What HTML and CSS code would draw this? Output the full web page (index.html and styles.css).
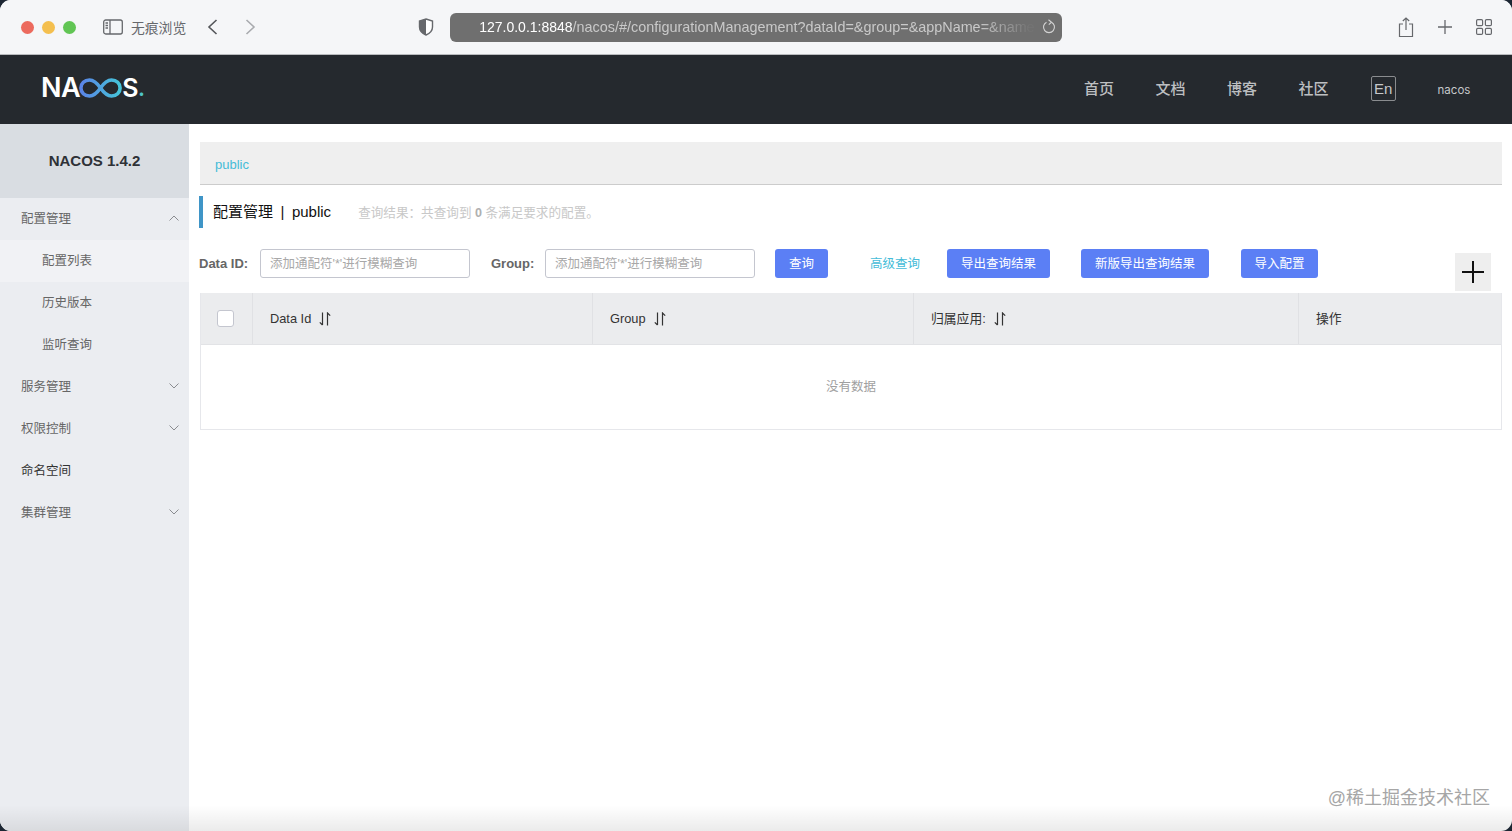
FILE: index.html
```html
<!DOCTYPE html>
<html lang="en">
<head>
  <meta charset="UTF-8" />
  <title>Nacos</title>
  <link rel="stylesheet" href="styles.css">
</head>
<body>
  <div class="window">
    <!-- Browser toolbar -->
    <div class="browser-bar">
      <div class="lights">
        <span class="light red"></span>
        <span class="light yellow"></span>
        <span class="light green"></span>
      </div>
      <svg class="tb-sidebar" width="20" height="16" viewBox="0 0 20 16" fill="none" stroke="#66686c" stroke-width="1.3">
        <rect x="0.7" y="1" width="18.6" height="14" rx="2"/>
        <path d="M7 1v14M2.5 4h2.5M2.5 6.5h2.5M2.5 9h2.5"/>
      </svg>
      <span class="private">无痕浏览</span>
      <svg class="tb-back" width="11" height="16" viewBox="0 0 11 16" fill="none" stroke="#55575b" stroke-width="1.6">
        <path d="M9.5 1L2 8l7.5 7"/>
      </svg>
      <svg class="tb-forward" width="11" height="16" viewBox="0 0 11 16" fill="none" stroke="#a9abaf" stroke-width="1.6">
        <path d="M1.5 1L9 8l-7.5 7"/>
      </svg>
      <svg class="tb-shield" width="16" height="18" viewBox="0 0 16 18">
        <path d="M8 1l6.5 2v6c0 4-3 6.500-6.500 8-3.500-1.500-6.500-4-6.500-8V3z" fill="#fff" stroke="#66686c" stroke-width="1.400"/>
        <path d="M8 1L1.500 3v6c0 4 3 6.500 6.500 8z" fill="#66686c"/>
      </svg>
      <div class="url-bar">
        <span class="url-text"><span class="url-host">127.0.0.1:8848</span><span class="url-path">/nacos/#/configurationManagement?dataId=&amp;group=&amp;appName=&amp;name</span></span>
        <svg width="14" height="16" viewBox="0 0 14 16" fill="none" stroke="#d4d4d4" stroke-width="1.100">
          <path d="M9.500 3.200A5.500 5.500 0 1 1 4.500 3.200"/>
          <path d="M6.500 0.800L9.500 3.200 6.800 5.600"/>
        </svg>
      </div>
      <div class="tb-right">
        <svg width="16" height="21" viewBox="0 0 16 21" fill="none" stroke="#66686c" stroke-width="1.200">
          <path d="M5 7H1.500v12.500h13V7H11M8 13V1M4.800 4L8 1l3.200 3"/>
        </svg>
        <svg width="14" height="14" viewBox="0 0 14 14" fill="none" stroke="#66686c" stroke-width="1.300">
          <path d="M7 0v14M0 7h14"/>
        </svg>
        <svg width="16" height="16" viewBox="0 0 16 16" fill="none" stroke="#66686c" stroke-width="1.200">
          <rect x="0.600" y="0.600" width="6" height="6" rx="1.200"/>
          <rect x="9.400" y="0.600" width="6" height="6" rx="1.200"/>
          <rect x="0.600" y="9.400" width="6" height="6" rx="1.200"/>
          <rect x="9.400" y="9.400" width="6" height="6" rx="1.200"/>
        </svg>
      </div>
    </div>

    <!-- Nacos header -->
    <header class="top-header">
      <div class="logo">
        <span>NA</span>
        <svg class="logo-mark" width="43" height="20" viewBox="0 0 43 20" fill="none" stroke="url(#logoGrad)" stroke-width="3.600">
          <defs>
            <linearGradient id="logoGrad" x1="0" y1="0" x2="1" y2="0">
              <stop offset="0" stop-color="#5a84e8"/>
              <stop offset="1" stop-color="#45c4d8"/>
            </linearGradient>
          </defs>
          <path d="M21.500 10C18 5 15 2 10.500 2 5.500 2 1.900 5.500 1.900 10s3.600 8 8.600 8c4.500 0 7.500-3 11-8s6.500-8 11-8c5 0 8.600 3.500 8.600 8s-3.600 8-8.600 8c-4.500 0-7.500-3-11-8z"/>
        </svg>
        <span class="logo-s">S</span><span class="logo-dot">.</span>
      </div>
      <nav class="top-nav">
        <a>首页</a>
        <a>文档</a>
        <a>博客</a>
        <a>社区</a>
      </nav>
      <span class="lang-btn">En</span>
      <span class="user">nacos</span>
    </header>

    <div class="layout">
      <!-- Left menu -->
      <aside class="sidebar">
        <div class="version">NACOS 1.4.2</div>
        <div class="menu-item">配置管理
          <svg width="10" height="6" viewBox="0 0 10 6" fill="none" stroke="#8a8c90"><path d="M0.500 5.500L5 1l4.500 4.500"/></svg>
        </div>
        <div class="menu-sub active">配置列表</div>
        <div class="menu-sub">历史版本</div>
        <div class="menu-sub">监听查询</div>
        <div class="menu-item">服务管理
          <svg width="10" height="6" viewBox="0 0 10 6" fill="none" stroke="#8a8c90"><path d="M0.500 0.500L5 5l4.500-4.500"/></svg>
        </div>
        <div class="menu-item">权限控制
          <svg width="10" height="6" viewBox="0 0 10 6" fill="none" stroke="#8a8c90"><path d="M0.500 0.500L5 5l4.500-4.500"/></svg>
        </div>
        <div class="menu-item dark">命名空间</div>
        <div class="menu-item">集群管理
          <svg width="10" height="6" viewBox="0 0 10 6" fill="none" stroke="#8a8c90"><path d="M0.500 0.500L5 5l4.500-4.500"/></svg>
        </div>
      </aside>

      <!-- Main content -->
      <main class="content">
        <div class="crumb"><a>public</a></div>

        <div class="page-title">
          <h1>配置管理<span class="sep">|</span>public</h1>
          <span class="result">查询结果：共查询到 <b>0</b> 条满足要求的配置。</span>
        </div>

        <div class="search-row">
          <label class="lbl-id">Data ID:</label>
          <input class="search-input" type="text" placeholder="添加通配符'*'进行模糊查询">
          <label class="lbl-group">Group:</label>
          <input class="search-input" type="text" placeholder="添加通配符'*'进行模糊查询">
          <button class="btn btn-query">查询</button>
          <a class="adv-link">高级查询</a>
          <button class="btn btn-export">导出查询结果</button>
          <button class="btn btn-export-new">新版导出查询结果</button>
          <button class="btn btn-import">导入配置</button>
          <div class="add-btn">
            <svg width="22" height="22" viewBox="0 0 22 22" fill="none" stroke="#111" stroke-width="2"><path d="M11 0v22M0 11h22"/></svg>
          </div>
        </div>

        <div class="table">
          <div class="table-head">
            <div class="th th-check"><span class="checkbox"></span></div>
            <div class="th">Data Id
              <svg class="sort" width="12" height="14" viewBox="0 0 12 14" fill="none" stroke="#333" stroke-width="1.200"><path d="M3.500 0.500v12.500M0.800 10.300l2.700 2.700M8.500 13.500V1l2.700 2.700"/></svg>
            </div>
            <div class="th">Group
              <svg class="sort" width="12" height="14" viewBox="0 0 12 14" fill="none" stroke="#333" stroke-width="1.200"><path d="M3.500 0.500v12.500M0.800 10.300l2.700 2.700M8.500 13.500V1l2.700 2.700"/></svg>
            </div>
            <div class="th cjk">归属应用:
              <svg class="sort" width="12" height="14" viewBox="0 0 12 14" fill="none" stroke="#333" stroke-width="1.200"><path d="M3.500 0.500v12.500M0.800 10.300l2.700 2.700M8.500 13.500V1l2.700 2.700"/></svg>
            </div>
            <div class="th cjk">操作</div>
          </div>
          <div class="table-empty">没有数据</div>
        </div>
      </main>
    </div>

    <div class="bottom-shade"></div>
    <div class="watermark">@稀土掘金技术社区</div>
  </div>
</body>
</html>
```

FILE: styles.css
```css
:root {
  --primary: #5b7ff5;
  --link: #45bcd8;
  --text: #333;
  --cjk-font: "Liberation Sans", "Noto Sans CJK SC", sans-serif;
}

html, body {
  margin: 0;
  padding: 0;
  height: 100%;
  overflow: hidden;
  background-color: #1c2633;
}

body {
  font-family: var(--cjk-font);
  color: var(--text);
}

a {
  cursor: pointer;
}

/* Window */
.window {
  position: relative;
  display: flex;
  flex-direction: column;
  height: 831px;
  overflow: hidden;
  border-radius: 11px;
  background: #fff;
}

/* Browser toolbar */
.browser-bar {
  flex: none;
  display: flex;
  align-items: center;
  height: 55px;
  padding-left: 21px;
  box-sizing: border-box;
  background: #f5f6f8;
  border-bottom: 1px solid #b9bbbe;
}

.lights {
  display: flex;
  gap: 8px;
}

.light {
  width: 13px;
  height: 13px;
  border-radius: 50%;
}

.red { background: #ec6a5e; }
.yellow { background: #f4bf4f; }
.green { background: #61c554; }

.tb-sidebar {
  margin-left: 27px;
}

.private {
  margin-left: 8px;
  font-size: 13.800px;
  color: #66686c;
}

.tb-back {
  margin-left: 21px;
}

.tb-forward {
  margin-left: 27px;
}

.tb-shield {
  margin-left: 162px;
}

.url-bar {
  display: flex;
  align-items: center;
  width: 612px;
  height: 29px;
  margin-left: 16px;
  padding: 0 6px 0 29px;
  box-sizing: border-box;
  background: #6f6f6f;
  border-radius: 6px;
}

.url-text {
  flex: 1;
  margin-right: 7px;
  font-size: 14px;
  white-space: nowrap;
  -webkit-mask-image: linear-gradient(to right, #000 90%, rgba(0, 0, 0, 0.05) 99%);
  mask-image: linear-gradient(to right, #000 90%, rgba(0, 0, 0, 0.05) 99%);
}

.url-host {
  color: #fff;
}

.url-path {
  font-size: 14.400px;
  color: #c9c9c9;
}

.tb-right {
  display: flex;
  align-items: center;
  gap: 24px;
  margin-left: 336px;
}

/* Nacos header */
.top-header {
  flex: none;
  display: flex;
  align-items: center;
  height: 69px;
  padding: 0 0 2px 41px;
  box-sizing: border-box;
  background: #25292e;
}

.logo {
  display: flex;
  align-items: center;
  width: 1043px;
  margin-bottom: 2px;
  font-family: Inter, sans-serif;
  font-size: 27px;
  font-weight: 600;
  letter-spacing: -0.5px;
  color: #fff;
}

.logo-mark {
  margin: 0 0 0 -1px;
}

.logo-s {
  font-size: 25px;
}

.logo-dot {
  font-size: 22px;
  color: #4fc4c8;
}

.top-nav {
  display: flex;
  gap: 41.500px;
  margin-bottom: 2px;
  font-size: 15px;
  font-weight: 500;
  color: #bdbfc1;
}

.lang-btn {
  width: 25px;
  height: 25px;
  margin-left: 42px;
  box-sizing: border-box;
  border: 1px solid #8a8c8f;
  border-radius: 2px;
  font-size: 15px;
  line-height: 23px;
  text-align: center;
  color: #c6c8ca;
}

.user {
  margin: 2px 0 0 42px;
  font-family: Inter, sans-serif;
  font-size: 11.500px;
  color: #c6c8ca;
}

/* Layout */
.layout {
  flex: 1;
  display: flex;
  min-height: 0;
}

/* Left menu */
.sidebar {
  flex: none;
  width: 189px;
  background: #ebedf1;
}

.version {
  height: 74px;
  background: #d9dde2;
  font-size: 15px;
  font-weight: 700;
  line-height: 73px;
  text-align: center;
  color: #2e3136;
}

.menu-item, .menu-sub {
  display: flex;
  align-items: center;
  justify-content: space-between;
  height: 42px;
  padding: 0 10px 3px 21px;
  box-sizing: border-box;
  font-size: 12.500px;
  color: #666;
}

.menu-sub {
  padding-left: 42px;
}

.menu-sub.active {
  background: #f1f2f5;
}

.menu-item.dark {
  color: #333;
}

/* Main content */
.content {
  flex: 1;
  min-width: 0;
  padding: 18px 10px 0;
}

.crumb {
  height: 43px;
  margin-left: 1px;
  padding-left: 15px;
  box-sizing: border-box;
  background: #efefef;
  border-bottom: 1px solid #ccc;
  font-size: 13px;
  line-height: 45px;
  color: var(--link);
}

.page-title {
  display: flex;
  align-items: center;
  height: 32px;
  margin-top: 11px;
  padding: 0 0 3px 10px;
  box-sizing: border-box;
  border-left: 4px solid #3f95c7;
}

.page-title h1 {
  margin: 0;
  font-size: 15px;
  font-weight: 400;
  color: #111;
}

.sep {
  margin: 0 7.500px;
}

.result {
  margin: 1px 0 0 27px;
  font-size: 12.600px;
  color: #c8c8c8;
}

.result b {
  color: #b0b0b0;
}

.search-row {
  display: flex;
  align-items: flex-start;
  height: 42px;
  margin-top: 21px;
  margin-bottom: 2px;
}

.search-row label {
  font-size: 13px;
  font-weight: 700;
  line-height: 29px;
  color: #666;
}

.lbl-id {
  width: 61px;
}

.lbl-group {
  width: 54px;
  margin-left: 21px;
}

.search-input {
  width: 210px;
  height: 29px;
  padding: 0 9px;
  box-sizing: border-box;
  border: 1px solid #c4c6cf;
  border-radius: 3px;
  font-family: var(--cjk-font);
  font-size: 12.500px;
  background: #fff;
}

.search-input::placeholder {
  color: #a8a8a8;
}

.btn {
  height: 29px;
  padding: 0 0 2px;
  border: none;
  border-radius: 3px;
  background: var(--primary);
  font-family: var(--cjk-font);
  font-size: 12.500px;
  color: #fff;
}

.btn-query {
  width: 53px;
  margin-left: 20px;
}

.adv-link {
  margin-left: 42px;
  font-size: 12.500px;
  line-height: 30px;
  color: var(--link);
}

.btn-export {
  width: 103px;
  margin-left: 27px;
}

.btn-export-new {
  width: 128px;
  margin-left: 31px;
}

.btn-import {
  width: 77px;
  margin-left: 32px;
}

.add-btn {
  display: flex;
  align-items: center;
  justify-content: center;
  width: 36px;
  height: 38px;
  margin: 4px 11px 0 auto;
  background: #eee;
}

/* Table */
.table {
  margin-left: 1px;
  border: 1px solid #e6e7eb;
  border-top: none;
}

.table-head {
  display: grid;
  grid-template-columns: 52px 340px 321px 385px 1fr;
  height: 52px;
  background: #ebecee;
  border-bottom: 1px solid #e2e3e6;
  box-sizing: border-box;
}

.th {
  display: flex;
  align-items: center;
  padding-left: 17px;
  border-right: 1px solid #e0e1e4;
  font-size: 12.800px;
  color: #333;
}

.th.cjk {
  padding-bottom: 2px;
}

.th:last-child {
  border-right: none;
}

.checkbox {
  width: 17px;
  height: 17px;
  margin-left: -1px;
  box-sizing: border-box;
  background: #fff;
  border: 1px solid #c4c6cf;
  border-radius: 3px;
}

.sort {
  margin-left: 8px;
}

.th.cjk .sort {
  margin-top: 2px;
}

.table-empty {
  height: 84px;
  font-size: 12.500px;
  line-height: 84px;
  text-align: center;
  color: #a0a0a0;
}

/* Screenshot edge shadow and watermark */
.bottom-shade {
  position: absolute;
  left: 0;
  right: 0;
  bottom: 0;
  height: 26px;
  background: linear-gradient(to bottom, rgba(0, 0, 0, 0), rgba(0, 0, 0, 0.08));
  pointer-events: none;
}

.watermark {
  position: absolute;
  right: 22px;
  bottom: 22px;
  font-size: 18px;
  color: #a6a6a6;
}
```
